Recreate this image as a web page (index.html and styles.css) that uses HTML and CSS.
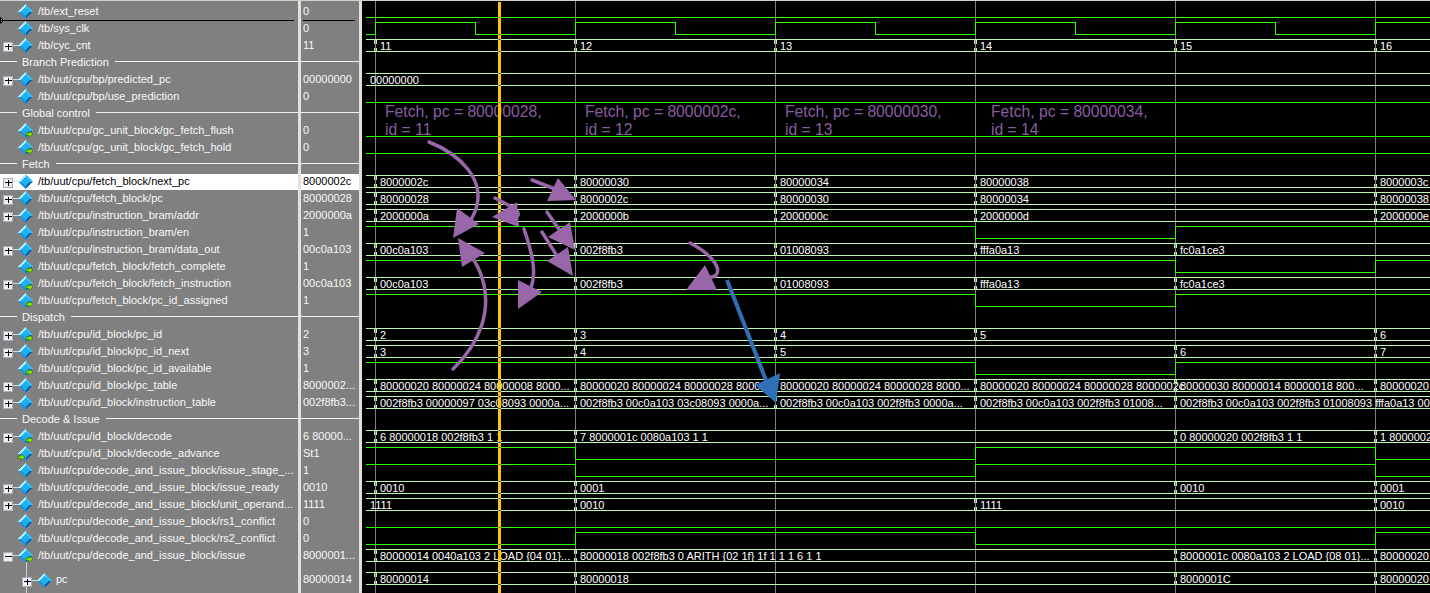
FILE: index.html
```html
<!DOCTYPE html>
<html lang="en">
<head>
    <meta charset="UTF-8">
    <title>Wave - tb</title>
    <link rel="stylesheet" href="styles.css">
</head>
<body>
    <div class="wave-window">
        <div class="names" id="names">
            <div class="tree-line"></div>
            <svg class="drop-arrow" width="4" height="7" viewBox="0 0 4 7"><path d="M0.5 0.5L3.5 3.5L0.5 6.5Z"/></svg>
            <div class="drop-line"></div>
        </div>
        <div class="splitter"></div>
        <div class="values" id="values">
            <div class="drop-line"></div>
        </div>
        <div class="splitter"></div>
        <div class="wave-pane">
            <svg id="wave" width="1068" height="592" viewBox="362 1 1068 592"></svg>
        </div>
    </div>
    <script src="script.js"></script>
</body>
</html>
```

FILE: styles.css
```css
body {
    margin: 0;
    background-color: #808080;
    font-family: "Liberation Sans", Arial, sans-serif;
    font-size: 11px;
    color: #f8f8f8;
}
.wave-window {
    display: flex;
    width: 1430px;
    height: 593px;
    overflow: hidden;
    box-sizing: border-box;
    border-top: 1px solid #d4d0c8;
}
.names {
    position: relative;
    width: 298px;
    flex: none;
    padding-top: 2px;
}
.values {
    position: relative;
    width: 58px;
    flex: none;
    padding-top: 2px;
}
.splitter {
    width: 3px;
    flex: none;
    background-color: #e4e1da;
}
.wave-pane {
    flex: 1;
    background-color: #000;
}
.wave-pane svg {
    display: block;
}
.row {
    display: flex;
    align-items: center;
    box-sizing: border-box;
    height: 17px;
    padding-bottom: 2px;
    white-space: nowrap;
}
.row.tall {
    height: 30px;
    padding-bottom: 0;
}
.row.selected {
    border-top: 1px solid #808080;
    padding-bottom: 3px;
    background-color: #fff;
    color: #000;
}
.row.child {
    padding-left: 19px;
}
.signal-icon {
    position: relative;
    flex: none;
    width: 34px;
    height: 17px;
    margin-top: 2px;
    margin-right: 4px;
}
.row.child .signal-icon {
    margin-right: 3px;
}
.values .row {
    padding-left: 2px;
}
.group::before,
.group::after {
    content: "";
    height: 1px;
    background-color: #f0f0f0;
}
.group::before {
    width: 17px;
    margin-right: 5px;
    flex: none;
}
.group::after {
    flex: 1;
    margin-left: 6px;
}
.values .group-empty {
    padding-left: 0;
}
.group-empty::after {
    content: "";
    flex: 1;
    height: 1px;
    background-color: #f0f0f0;
}
.drop-line {
    position: absolute;
    top: 19px;
    left: 2px;
    right: 4px;
    height: 1px;
    background-color: #000;
}
.drop-arrow {
    position: absolute;
    top: 16px;
    left: 0;
}
.drop-arrow path {
    fill: #808080;
    stroke: #000;
}
.tree-line {
    position: absolute;
    top: 558px;
    bottom: 0;
    left: 26px;
    width: 1px;
    background-color: #d0d0d0;
}
.bus-text {
    font-family: "Liberation Sans", Arial, sans-serif;
    font-size: 11px;
    fill: #fff;
}
.note {
    font-family: "Liberation Sans", Arial, sans-serif;
    font-size: 15.7px;
    fill: #8a5ca0;
}
.grid-line {
    stroke: #808080;
}
.bus-line {
    stroke: #bdf7b2;
    fill: none;
    shape-rendering: crispEdges;
}
.bit-line {
    stroke: #33ff00;
    fill: none;
    shape-rendering: crispEdges;
}
.cursor {
    fill: #ffc800;
}
.arrow-purple {
    stroke: #9966aa;
    stroke-width: 3.5;
    stroke-linecap: round;
    fill: none;
}
.arrow-blue {
    stroke: #2e6fb5;
    stroke-width: 4;
    fill: none;
}
.head-purple {
    fill: #9966aa;
}
.head-blue {
    fill: #2e6fb5;
}
```

FILE: script.js
```js
const ticks = [375, 575, 775, 975, 1175, 1375];
const endX = 1430;

// wave: bus = [[x, text]...], bit = {start level, toggles x}
const signals = [
    { name: "/tb/ext_reset", value: "0", bit: [0, []] },
    { name: "/tb/sys_clk", value: "0", bit: [0, [375, 475, 575, 675, 775, 875, 975, 1075, 1175, 1275, 1375]] },
    { name: "/tb/cyc_cnt", value: "11", plus: 1, bus: [[375, "11"], [575, "12"], [775, "13"], [975, "14"], [1175, "15"], [1375, "16"]] },
    { group: "Branch Prediction" },
    { name: "/tb/uut/cpu/bp/predicted_pc", value: "00000000", plus: 1, bus: [[365, "00000000"]] },
    { name: "/tb/uut/cpu/bp/use_prediction", value: "0", bit: [0, []] },
    { group: "Global control" },
    { name: "/tb/uut/cpu/gc_unit_block/gc_fetch_flush", value: "0", arrow: "right", bit: [0, []] },
    { name: "/tb/uut/cpu/gc_unit_block/gc_fetch_hold", value: "0", arrow: "right", bit: [0, []] },
    { group: "Fetch" },
    { name: "/tb/uut/cpu/fetch_block/next_pc", value: "8000002c", plus: 1, selected: 1, bus: [[375, "8000002c"], [575, "80000030"], [775, "80000034"], [975, "80000038"], [1375, "8000003c"]] },
    { name: "/tb/uut/cpu/fetch_block/pc", value: "80000028", plus: 1, bus: [[375, "80000028"], [575, "8000002c"], [775, "80000030"], [975, "80000034"], [1375, "80000038"]] },
    { name: "/tb/uut/cpu/instruction_bram/addr", value: "2000000a", plus: 1, bus: [[375, "2000000a"], [575, "2000000b"], [775, "2000000c"], [975, "2000000d"], [1375, "2000000e"]] },
    { name: "/tb/uut/cpu/instruction_bram/en", value: "1", bit: [1, [975, 1175]] },
    { name: "/tb/uut/cpu/instruction_bram/data_out", value: "00c0a103", plus: 1, bus: [[375, "00c0a103"], [575, "002f8fb3"], [775, "01008093"], [975, "fffa0a13"], [1175, "fc0a1ce3"]] },
    { name: "/tb/uut/cpu/fetch_block/fetch_complete", value: "1", arrow: "right", bit: [1, [1175, 1375]] },
    { name: "/tb/uut/cpu/fetch_block/fetch_instruction", value: "00c0a103", plus: 1, arrow: "right", bus: [[375, "00c0a103"], [575, "002f8fb3"], [775, "01008093"], [975, "fffa0a13"], [1175, "fc0a1ce3"]] },
    { name: "/tb/uut/cpu/fetch_block/pc_id_assigned", value: "1", arrow: "right", bit: [1, [975, 1175]] },
    { group: "Dispatch" },
    { name: "/tb/uut/cpu/id_block/pc_id", value: "2", plus: 1, arrow: "right", bus: [[375, "2"], [575, "3"], [775, "4"], [975, "5"], [1375, "6"]] },
    { name: "/tb/uut/cpu/id_block/pc_id_next", value: "3", plus: 1, bus: [[375, "3"], [575, "4"], [775, "5"], [1175, "6"], [1375, "7"]] },
    { name: "/tb/uut/cpu/id_block/pc_id_available", value: "1", arrow: "right", bit: [1, [975, 1175]] },
    { name: "/tb/uut/cpu/id_block/pc_table", value: "8000002...", plus: 1, bus: [[375, "80000020 80000024 80000008 8000..."], [575, "80000020 80000024 80000028 8000..."], [775, "80000020 80000024 80000028 8000..."], [975, "80000020 80000024 80000028 8000002c"], [1175, "80000030 80000014 80000018 800..."], [1375, "80000020"]] },
    { name: "/tb/uut/cpu/id_block/instruction_table", value: "002f8fb3...", plus: 1, bus: [[375, "002f8fb3 00000097 03c08093 0000a..."], [575, "002f8fb3 00c0a103 03c08093 0000a..."], [775, "002f8fb3 00c0a103 002f8fb3 0000a..."], [975, "002f8fb3 00c0a103 002f8fb3 01008..."], [1175, "002f8fb3 00c0a103 002f8fb3 01008093 fffa0a13 00"]] },
    { group: "Decode & Issue" },
    { name: "/tb/uut/cpu/id_block/decode", value: "6 80000...", plus: 1, arrow: "right", bus: [[375, "6 80000018 002f8fb3 1 1"], [575, "7 8000001c 0080a103 1 1"], [1175, "0 80000020 002f8fb3 1 1"], [1375, "1 8000002"]] },
    { name: "/tb/uut/cpu/id_block/decode_advance", value: "St1", arrow: "left", bit: [1, [575, 975, 1375]] },
    { name: "/tb/uut/cpu/decode_and_issue_block/issue_stage_...", value: "1", bit: [1, [575, 975, 1375]] },
    { name: "/tb/uut/cpu/decode_and_issue_block/issue_ready", value: "0010", plus: 1, bus: [[375, "0010"], [575, "0001"], [1175, "0010"], [1375, "0001"]] },
    { name: "/tb/uut/cpu/decode_and_issue_block/unit_operand...", value: "1111", plus: 1, bus: [[365, "1111"], [575, "0010"], [975, "1111"], [1375, "0010"]] },
    { name: "/tb/uut/cpu/decode_and_issue_block/rs1_conflict", value: "0", bit: [0, []] },
    { name: "/tb/uut/cpu/decode_and_issue_block/rs2_conflict", value: "0", bit: [0, [575, 975, 1375]] },
    { name: "/tb/uut/cpu/decode_and_issue_block/issue", value: "8000001...", minus: 1, arrow: "right", bus: [[375, "80000014 0040a103 2 LOAD {04 01}..."], [575, "80000018 002f8fb3 0 ARITH {02 1f} 1f 1 1 1 6 1 1"], [1175, "8000001c 0080a103 2 LOAD {08 01}..."], [1375, "80000020"]] },
    { name: "pc", value: "80000014", plus: 1, child: 1, tall: 1, bus: [[375, "80000014"], [575, "80000018"], [1175, "8000001C"], [1375, "80000020"]] },
];

const notes = [
    [385, "Fetch, pc = 80000028,", "id = 11"],
    [585, "Fetch, pc = 8000002c,", "id = 12"],
    [785, "Fetch, pc = 80000030,", "id = 13"],
    [991, "Fetch, pc = 80000034,", "id = 14"],
];

// hand drawn arrows on top of the waves: stroke path + head triangle
const arrows = [
    ["M429 142C462 155 483 180 477 205C475 215 470 222 464 229", "457,208 479,224 453,238"],
    ["M453 369C478 345 495 310 480 272C477 265 473 258 470 256", "458,238 485,253 462,267"],
    ["M495 198L512 207C520 212 520 217 514 217L500 217", "517,202 519,227 492,217"],
    ["M532 180L560 191", "558,178 576,200 547,201"],
    ["M547 212L565 238", "570,222 575,250 548,237"],
    ["M542 232L562 264", "568,247 573,276 547,261"],
    ["M524 229C533 255 537 275 530 290", "518,280 542,292 518,309"],
    ["M690 243C710 253 722 268 716 275C713 278 708 278 702 278", "705,265 717,290 686,290"],
];

const svgNs = "http://www.w3.org/2000/svg";
const namesPane = document.getElementById("names");
const valuesPane = document.getElementById("values");
const waveSvg = document.getElementById("wave");
const cursorMarks = [];

function addSvg(tag, attrs, text) {
    const el = document.createElementNS(svgNs, tag);
    Object.keys(attrs).forEach((key) => el.setAttribute(key, attrs[key]));
    if (text) el.textContent = text;
    waveSvg.appendChild(el);
    return el;
}

function iconMarkup(signal) {
    let s = `<svg class="signal-icon" viewBox="0 0 34 17">`;
    if (signal.plus || signal.minus) {
        s += `<path d="M13 8.5H18" stroke="#d8d8d8" shape-rendering="crispEdges"/>`;
        s += `<rect x="3.5" y="5.5" width="9" height="9" rx="1" fill="#eef0f6" stroke="#a8acb8" shape-rendering="crispEdges"/>`;
        s += `<path d="M5 9.5H12" stroke="#000" shape-rendering="crispEdges"/>`;
        if (signal.plus) s += `<path d="M8.5 6.5V13" stroke="#000" shape-rendering="crispEdges"/>`;
    }
    s += `<g shape-rendering="crispEdges">`;
    s += `<path d="M25.5 1L18 8.5H25.5Z" fill="#a8ecff"/>`;
    s += `<path d="M25.5 1L33 8.5H25.5Z" fill="#34bcf4"/>`;
    s += `<path d="M25.5 16L18 8.5H25.5Z" fill="#1c94dc"/>`;
    s += `<path d="M25.5 16L33 8.5H25.5Z" fill="#0c64ac"/>`;
    s += `<path d="M25.5 4L30 8.5L25.5 13L21 8.5Z" fill="#20b0f0"/>`;
    s += `</g>`;
    if (signal.arrow) {
        const dx = signal.arrow === "left" ? 18 : 26;
        s += `<path transform="translate(${dx} 9)" d="M0 2H3V0L7 3L3 6.5V4.5H0Z" fill="#80e800" stroke="#2c6000" stroke-width="0.6"/>`;
    }
    return s + `</svg>`;
}

function buildRows() {
    signals.forEach((signal) => {
        const nameRow = document.createElement("div");
        const valueRow = document.createElement("div");
        nameRow.className = "row";
        valueRow.className = "row";
        if (signal.group) {
            nameRow.classList.add("group");
            nameRow.textContent = signal.group;
            valueRow.classList.add("group-empty");
        } else {
            nameRow.innerHTML = iconMarkup(signal) + "<span></span>";
            nameRow.querySelector("span").textContent = signal.name;
            valueRow.textContent = signal.value;
            if (signal.selected) {
                nameRow.classList.add("selected");
                valueRow.classList.add("selected");
            }
            if (signal.child) nameRow.classList.add("child");
            if (signal.tall) {
                nameRow.classList.add("tall");
                valueRow.classList.add("tall");
            }
        }
        namesPane.appendChild(nameRow);
        valuesPane.appendChild(valueRow);
    });
}

function drawBit(center, wave) {
    let level = wave[0];
    let d = `M366 ${center + (level ? -5.5 : 6.5)}`;
    wave[1].forEach((x) => {
        d += `H${x + 0.5}`;
        level = level ? 0 : 1;
        d += `V${center + (level ? -5.5 : 6.5)}`;
    });
    d += `H${endX}`;
    addSvg("path", { d: d, class: "bit-line" });
    const last = wave[1].filter((x) => x < 499).length;
    const levelAtCursor = last % 2 ? !wave[0] : wave[0];
    cursorMarks.push([center + (levelAtCursor ? -6 : 6), "#d01818"]);
}

function drawBus(center, wave) {
    const top = center - 5.5;
    const bottom = center + 6.5;
    let d = `M366 ${top}H${endX}M366 ${bottom}H${endX}`;
    wave.forEach((item) => {
        const x = item[0];
        if (x >= 375) {
            d += `M${x - 0.5} ${top}V${top + 4}M${x - 0.5} ${bottom}V${bottom - 4}`;
            d += `M${x + 1.5} ${top}V${top + 4}M${x + 1.5} ${bottom}V${bottom - 4}`;
        }
        addSvg("text", { x: x + 5, y: center + 5, class: "bus-text" }, item[1]);
    });
    addSvg("path", { d: d, class: "bus-line" });
    cursorMarks.push([center - 6, "#2020d0"], [center + 6, "#2020d0"]);
}

function drawWaves() {
    ticks.forEach((x) => {
        addSvg("path", { d: `M${x + 0.5} 1V593`, class: "grid-line", "shape-rendering": "crispEdges" });
    });
    let center = 11;
    signals.forEach((signal) => {
        if (signal.tall) center += 6;
        if (signal.bit) drawBit(center, signal.bit);
        if (signal.bus) drawBus(center, signal.bus);
        center += 17;
    });
    notes.forEach((note) => {
        addSvg("text", { x: note[0], y: 117, class: "note" }, note[1]);
        addSvg("text", { x: note[0], y: 135, class: "note" }, note[2]);
    });
    addSvg("rect", { x: 498, y: 2, width: 3, height: 591, class: "cursor" });
    cursorMarks.forEach((mark) => {
        addSvg("rect", { x: 498.5, y: mark[0], width: 2, height: 1, fill: mark[1] });
    });
    arrows.forEach((arrow) => {
        addSvg("path", { d: arrow[0], class: "arrow-purple" });
        addSvg("polygon", { points: arrow[1], class: "head-purple" });
    });
    addSvg("path", { d: "M727 280L769 388", class: "arrow-blue" });
    addSvg("polygon", { points: "780,373 755,385 776,403", class: "head-blue" });
}

buildRows();
drawWaves();
```
